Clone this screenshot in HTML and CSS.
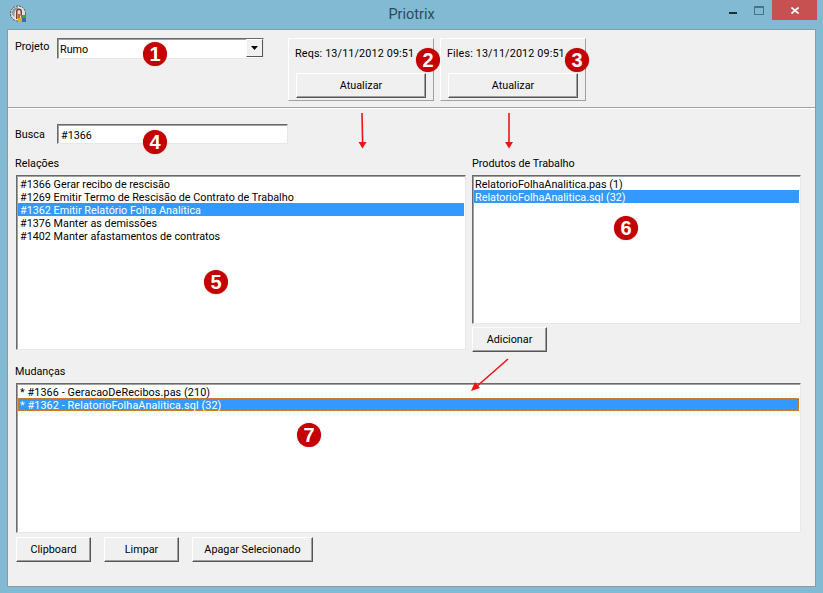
FILE: index.html
```html
<!DOCTYPE html>
<html lang="pt">
<head>
<meta charset="utf-8">
<title>Priotrix</title>
<link rel="stylesheet" href="styles.css">
</head>
<body>
<div class="window">
  <header class="titlebar">
    <svg class="appicon" width="17" height="18" viewBox="0 0 17 18">
      <circle cx="8" cy="8.500" r="7.500" fill="#dfe3e6" stroke="#4d4d4d" stroke-dasharray="2 1"/>
      <path d="M1.500 8.500a6.500 6.500 0 0 1 6-6.500l1 2a4.500 4.500 0 0 0-4 4.500v4z" fill="#8f9aa3"/>
      <path d="M6 14V6.500a3 3 0 0 1 6 0V11h-1.500V6.500a1.500 1.500 0 0 0-3 0V14z" fill="#8a3a2a"/>
      <rect x="8" y="9" width="2" height="5" fill="#b06a50"/>
      <rect x="11" y="10" width="5" height="3" fill="#4f9a3f"/>
      <rect x="8" y="13" width="4" height="4" fill="#d8b030"/>
      <rect x="12" y="13" width="4" height="4" fill="#3f68b0"/>
    </svg>
    <span class="title">Priotrix</span>
    <div class="controls">
      <span class="ctl ctl-min"><svg width="8" height="2"><rect width="8" height="2" fill="#1f2f3a"/></svg></span>
      <span class="ctl"><svg width="10" height="9"><rect x=".5" y=".5" width="9" height="8" fill="none" stroke="#4a7186"/><rect width="10" height="2" fill="#4a7186"/></svg></span>
      <span class="ctl close"><svg width="8" height="7" viewBox="0 0 8 7"><path d="M.5.5l7 6M7.500.5l-7 6" stroke="#fff" stroke-width="1.600" fill="none"/></svg></span>
    </div>
  </header>

  <main class="client">
    <section class="toppanel">
      <div class="project">
        <label class="lbl">Projeto</label>
        <div class="combo sunken"><span class="comboval">Rumo</span><span class="combobtn"><svg width="7" height="4"><path d="M0 0h7L3.500 4z" fill="#000"/></svg></span></div>
      </div>
      <div class="sync">
        <div class="syncbox">
          <span class="stamp">Reqs: 13/11/2012 09:51</span>
          <button class="btn wide">Atualizar</button>
        </div>
        <div class="syncbox">
          <span class="stamp">Files: 13/11/2012 09:51</span>
          <button class="btn wide">Atualizar</button>
        </div>
      </div>
    </section>

    <section class="bottompanel">
      <div class="search">
        <label class="lbl">Busca</label>
        <div class="edit sunken">#1366</div>
      </div>

      <div class="columns">
        <div class="col col-left">
          <div class="lbl">Relações</div>
          <ul class="list sunken h-rel">
            <li>#1366 Gerar recibo de rescisão</li>
            <li>#1269 Emitir Termo de Rescisão de Contrato de Trabalho</li>
            <li class="sel">#1362 Emitir Relatório Folha Analítica</li>
            <li>#1376 Manter as demissões</li>
            <li>#1402 Manter afastamentos de contratos</li>
          </ul>
        </div>
        <div class="col col-right">
          <div class="lbl">Produtos de Trabalho</div>
          <ul class="list sunken h-prod">
            <li>RelatorioFolhaAnalitica.pas (1)</li>
            <li class="sel">RelatorioFolhaAnalitica.sql (32)</li>
          </ul>
          <button class="btn add">Adicionar</button>
        </div>
      </div>

      <div class="changes">
        <div class="lbl">Mudanças</div>
        <ul class="list sunken h-chg">
          <li>* #1366 - GeracaoDeRecibos.pas (210)</li>
          <li class="sel focus">* #1362 - RelatorioFolhaAnalitica.sql (32)</li>
        </ul>
      </div>

      <div class="actions">
        <button class="btn b1">Clipboard</button>
        <button class="btn b1">Limpar</button>
        <button class="btn b2">Apagar Selecionado</button>
      </div>
    </section>
  </main>

  <svg class="arrows" width="823" height="593" viewBox="0 0 823 593">
    <g stroke="#f01414" stroke-width="1.600" fill="none">
      <path d="M362 113l.6 29"/><path d="M509 113v29"/><path d="M508 359l-33 29"/>
    </g>
    <g fill="#f01414">
      <path d="M358.500 142h8l-4 6.500z"/><path d="M505 142h8l-4 6.500z"/><path d="M471 391l9-3-5-6z"/>
    </g>
  </svg>

  <span class="badge b-1">1</span>
  <span class="badge b-2">2</span>
  <span class="badge b-3">3</span>
  <span class="badge b-4">4</span>
  <span class="badge b-5">5</span>
  <span class="badge b-6">6</span>
  <span class="badge b-7">7</span>
</div>
</body>
</html>
```

FILE: styles.css
```css
* { box-sizing: border-box; }
html, body { margin: 0; padding: 0; }
body {
  width: 823px; height: 593px; overflow: hidden;
  font-family: Roboto, "Liberation Sans", sans-serif;
  font-size: 10.8px; color: #000;
}
.window {
  position: relative; width: 823px; height: 593px;
  background: #82bad3; display: flex; flex-direction: column;
}
.titlebar { height: 29px; position: relative; display: flex; align-items: flex-start; justify-content: center; flex: none; }
.appicon { position: absolute; left: 10px; top: 5px; }
.title { font-size: 14.5px; color: #2c4a5e; line-height: 30px; }
.controls { position: absolute; right: 6px; top: 0; display: flex; }
.ctl { width: 26px; height: 20px; display: flex; align-items: center; justify-content: center; }
.ctl-min { padding-top: 6px; }
.close { width: 45px; background: #c75050; }
.client {
  flex: none; width: 809px; height: 558px; margin-left: 7px;
  background: #f0f0f0; border: 1px solid #8b9aa3;
  display: flex; flex-direction: column;
}
.lbl { line-height: 16px; margin-left: -1px; }
.sunken {
  background: #fff;
  border: 1px solid; border-color: #6b6b6b #e8e8e8 #e8e8e8 #6b6b6b;
  box-shadow: inset 1px 1px 0 #a0a0a0;
}
.toppanel {
  height: 78px; flex: none; display: flex;
  padding: 8px 0 0 8px;
  border-bottom: 1px solid #a0a0a0; box-shadow: 0 1px 0 #fff;
}
.project { display: flex; gap: 7px; width: 272px; align-items: flex-start; }
.project .lbl { margin: 1px 1px 0 -1px; width: 34px; }
.combo { width: 207px; height: 21px; display: flex; justify-content: space-between; padding: 0 0 0 2px; }
.comboval { line-height: 17px; margin-top: 2px; }
.combobtn {
  width: 17px; height: 18px; background: #f0f0f0;
  border: 1px solid; border-color: #fff #555 #555 #fff;
  display: flex; align-items: center; justify-content: center;
}
.sync { display: flex; gap: 6px; }
.syncbox {
  width: 146px; height: 63px; border: 1px solid; border-color: #fff #a0a0a0 #a0a0a0 #fff;
  display: flex; flex-direction: column; padding: 6px 0 0 7px;
}
.stamp { line-height: 17px; height: 28px; white-space: nowrap; margin-left: -1px; letter-spacing: .13px; }
.btn {
  font: inherit; color: #000; background: #f0f0f0; padding: 0; height: 25px;
  border: 1px solid; border-color: #fff #555 #555 #fff;
  box-shadow: inset -1px -1px 0 #a0a0a0;
}
.wide { width: 130px; }
.bottompanel { padding: 16px 0 0 8px; display: flex; flex-direction: column; flex: 1; }
.search { display: flex; gap: 12px; align-items: center; height: 20px; }
.search .lbl { width: 29px; margin: 2px 1px 0 -1px; }
.edit { width: 231px; height: 20px; padding: 2px 0 0 3px; line-height: 17px; }
.columns { display: flex; gap: 6px; margin-top: 12px; }
.col-left { width: 450px; }
.col-right { width: 329px; }
.col .lbl { height: 19px; }
.col-right .lbl { margin-left: 0; }
.changes .lbl { height: 19px; }
.list { list-style: none; margin: 0; padding: 1px; overflow: hidden; }
.list li { height: 13px; line-height: 15px; padding-left: 2px; white-space: nowrap; }
.sel { background: #3399ff; color: #fff; }
.list .focus { border: 1px dotted #e07b20; line-height: 13px; padding-left: 1px; }
.h-rel { height: 175px; width: 450px; }
.h-prod { height: 149px; width: 329px; }
.h-prod li { padding-left: 1px; }
.add { width: 75px; margin-top: 3px; display: block; }
.changes { margin-top: 12px; }
.h-chg { height: 150px; width: 785px; letter-spacing: .1px; }
.actions { display: flex; margin-top: 4px; }
.b1 { width: 75px; margin-right: 13px; }
.b2 { width: 121px; }
.arrows { position: absolute; left: 0; top: 0; pointer-events: none; }
.badge {
  position: absolute; width: 24px; height: 24px; border-radius: 50%;
  background: #c40000; color: #fff; font-family: "Liberation Sans", sans-serif; font-weight: 700;
  font-size: 20px; line-height: 24px; text-align: center;
  box-shadow: 0 0 1px rgba(120, 0, 0, .5);
}
.b-1 { left: 143px; top: 42px; }
.b-2 { left: 416px; top: 48px; }
.b-3 { left: 565px; top: 48px; }
.b-4 { left: 143px; top: 130px; }
.b-5 { left: 204px; top: 270px; }
.b-6 { left: 614px; top: 216px; }
.b-7 { left: 297px; top: 423px; }
```
